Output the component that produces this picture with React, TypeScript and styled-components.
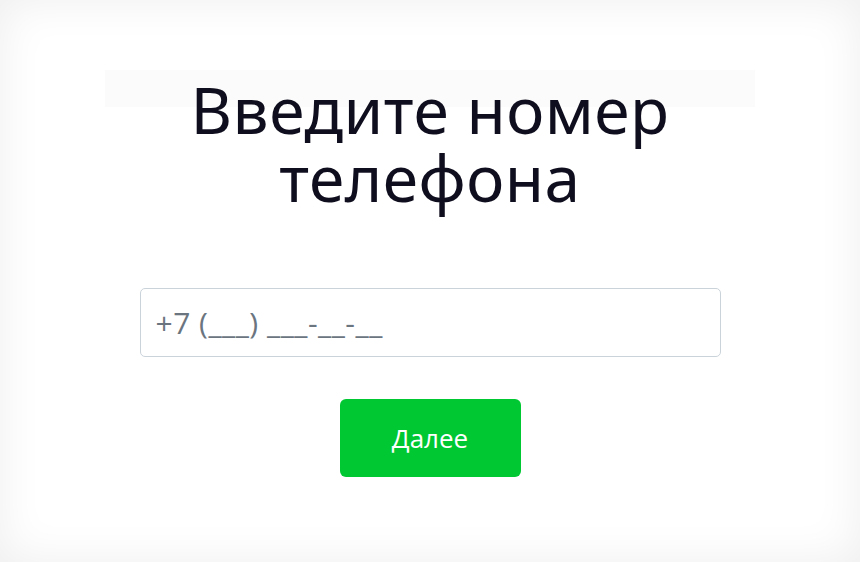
import * as React from 'react';
import styled, { createGlobalStyle } from 'styled-components';

const GlobalStyle = createGlobalStyle`
	html, body {
		margin: 0;
		padding: 0;
		background: #ffffff;
	}
	* {
		box-sizing: border-box;
	}
`;

const Page = styled.div`
	width: 860px;
	height: 562px;
	background: #ffffff;
	box-shadow: inset 0 0 46px rgba(0, 0, 0, 0.07);
	display: flex;
	flex-direction: column;
	align-items: center;
	padding-top: 70px;
`;

const Title = styled.h1`
	width: 650px;
	margin: 0;
	padding-top: 6px;
	font-family: 'Noto Sans', sans-serif;
	font-weight: 400;
	font-size: 64px;
	line-height: 68px;
	letter-spacing: 0.5px;
	text-align: center;
	color: #0f0e1e;
	background: linear-gradient(#fbfbfb, #fbfbfb) top / 100% 37px no-repeat;
`;

const Form = styled.form`
	display: flex;
	flex-direction: column;
	align-items: center;
	gap: 42px;
	margin-top: 76px;
`;

const PhoneInput = styled.input`
	width: 581px;
	height: 69px;
	padding: 0 15px;
	border: 1px solid #cbd3da;
	border-radius: 5px;
	font-family: 'Open Sans', sans-serif;
	font-size: 30px;
	letter-spacing: 0.5px;
	color: #333;
	outline: none;

	&::placeholder {
		color: #6b7580;
	}
`;

const SubmitButton = styled.button`
	width: 181px;
	height: 78px;
	border: none;
	border-radius: 6px;
	background: #00c832;
	color: #ffffff;
	font-family: 'Open Sans', sans-serif;
	font-size: 26px;
	cursor: pointer;
`;

export default function App() {
	return (
		<>
			<GlobalStyle />
			<Page>
				<Title>Введите номер телефона</Title>
				<Form onSubmit={(e) => e.preventDefault()}>
					<PhoneInput type="tel" placeholder="+7 (___) ___-__-__" />
					<SubmitButton type="submit">Далее</SubmitButton>
				</Form>
			</Page>
		</>
	);
}
